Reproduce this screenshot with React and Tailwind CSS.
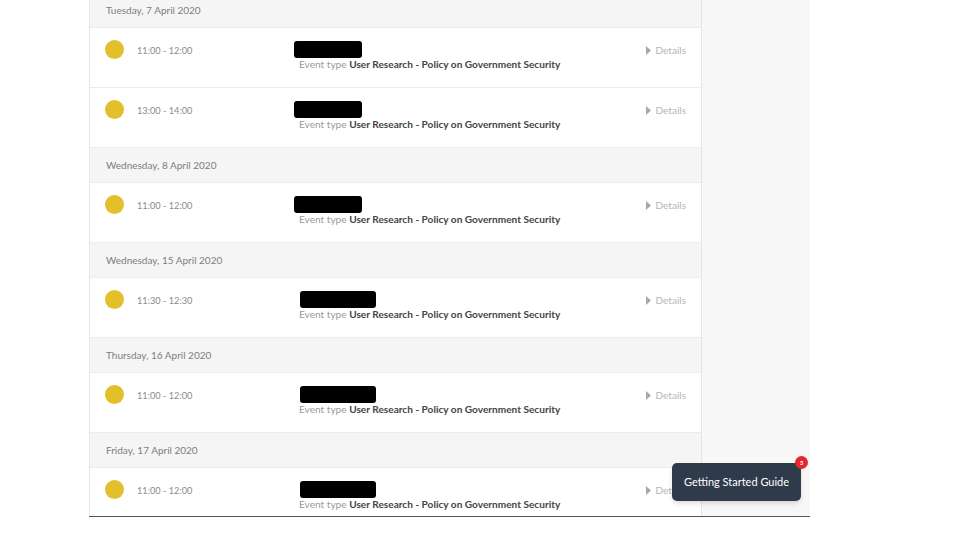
import React from 'react';

const days = [
  {
    label: 'Tuesday, 7 April 2020',
    events: [
      { time: '11:00 - 12:00', offset: 'ml-0', bar: 'w-[68px]' },
      { time: '13:00 - 14:00', offset: 'ml-0', bar: 'w-[68px]' },
    ],
  },
  { label: 'Wednesday, 8 April 2020', events: [{ time: '11:00 - 12:00', offset: 'ml-0', bar: 'w-[68px]' }] },
  { label: 'Wednesday, 15 April 2020', events: [{ time: '11:30 - 12:30', offset: 'ml-[6px]', bar: 'w-[76px]' }] },
  { label: 'Thursday, 16 April 2020', events: [{ time: '11:00 - 12:00', offset: 'ml-[6px]', bar: 'w-[76px]' }] },
  { label: 'Friday, 17 April 2020', events: [{ time: '11:00 - 12:00', offset: 'ml-[6px]', bar: 'w-[76px]' }] },
];

const EventRow = ({ event }) => (
  <div className="flex h-[60px] items-start border-b border-[#ececec] bg-white">
    <div className="ml-[15px] mt-[12px] h-[19px] w-[19px] shrink-0 rounded-full bg-[#e3bf2b]" />
    <div className="ml-[13px] mt-[17px] w-[157px] shrink-0 text-[9.2px] leading-[12px] text-[#8a8a8a]">
      {event.time}
    </div>
    <div className="flex flex-1 flex-col pt-[13px]">
      <div className={`h-[17px] rounded-[3px] bg-black ${event.offset} ${event.bar}`} />
      <div className="ml-[5px] mt-[1px] text-[10.1px] leading-[11px] text-[#9a9a9a]">
        Event type <span className="font-bold text-[#444]">User Research - Policy on Government Security</span>
      </div>
    </div>
    <div className="mr-[15px] mt-[16px] flex items-center gap-[5px] text-[10px] leading-[12px] text-[#b5b5b5]">
      <svg width="5" height="9" viewBox="0 0 5 9">
        <path d="M0 0 L5 4.5 L0 9 Z" fill="#a8a8a8" />
      </svg>
      Details
    </div>
  </div>
);

export default function App() {
  return (
    <div className="relative h-[540px] w-[960px] overflow-hidden bg-white font-['Lato','Open_Sans',sans-serif]">
      <div className="ml-[89px] flex h-[517px] w-[721px] border-b border-[#555]">
        <div className="w-[613px] overflow-hidden border-l border-r border-[#e6e6e6] bg-white">
          <div className="-mt-[7px]">
            {days.map((day) => (
              <div key={day.label}>
                <div className="flex h-[35px] items-center border-b border-[#ececec] bg-[#f5f5f5] pl-[16px] text-[10px] text-[#7d7d7d]">
                  {day.label}
                </div>
                {day.events.map((ev, i) => (
                  <EventRow key={i} event={ev} />
                ))}
              </div>
            ))}
          </div>
        </div>
        <div className="flex-1 bg-[#f7f7f7]" />
      </div>

      <div className="absolute left-[672px] top-[463px] flex h-[38px] w-[129px] items-center justify-center rounded-[5px] bg-[#2f3a4b] text-[11px] text-white shadow-md">
        Getting Started Guide
        <span className="absolute -right-[7px] -top-[7px] flex h-[13px] w-[13px] items-center justify-center rounded-full bg-[#e5272d] text-[6px] font-bold leading-none text-white">
          3
        </span>
      </div>
    </div>
  );
}
